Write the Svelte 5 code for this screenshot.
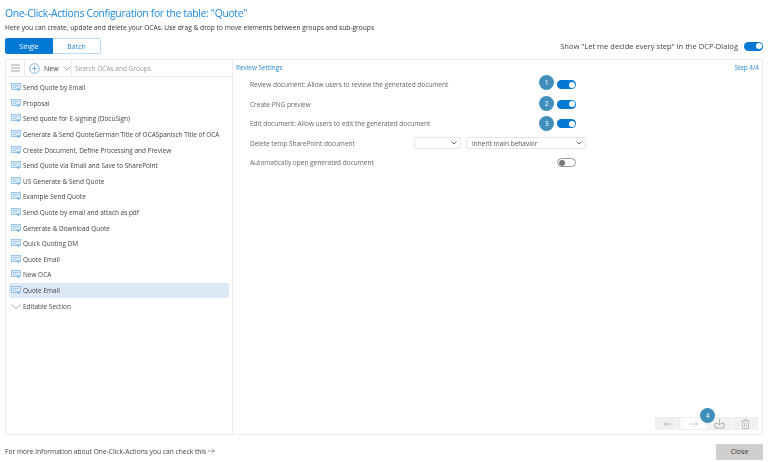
<script>
  const items = ['Send Quote by Email','Proposal','Send quote for E-signing (DocuSign)','Generate & Send QuoteGerman Title of OCASpanisch Title of OCA','Create Document, Define Processing and Preview','Send Quote via Email and Save to SharePoint','US Generate & Send Quote','Example Send Quote','Send Quote by email and attach as pdf','Generate & Download Quote','Quick Quoting DM','Quote Email','New OCA','Quote Email'];
  const settings = [
    { label: 'Review document: Allow users to review the generated document', badge: 1 },
    { label: 'Create PNG preview', badge: 2 },
    { label: 'Edit document: Allow users to edit the generated document', badge: 3 }
  ];
</script>

<div class="page">
  <h1>One-Click-Actions Configuration for the table: "Quote"</h1>
  <p class="sub">Here you can create, update and delete your OCAs. Use drag &amp; drop to move elements between groups and sub-groups</p>

  <div class="modebar">
    <div class="tabs">
      <button class="tab active">Single</button>
      <button class="tab">Batch</button>
    </div>
    <div class="dcp">
      <span>Show "Let me decide every step" in the DCP-Dialog</span>
      <span class="toggle on"></span>
    </div>
  </div>

  <div class="panel">
    <aside class="left">
      <div class="toolbar">
        <div class="tb-menu">
          <svg width="9" height="8" viewBox="0 0 9 8"><path d="M0 1h9M0 4h9M0 7h9" stroke="#999" stroke-width=".9" fill="none"/></svg>
        </div>
        <div class="tb-new">
          <svg width="11" height="11" viewBox="0 0 11 11"><circle cx="5.500" cy="5.500" r="4.800" stroke="#6aa5dc" fill="none" stroke-width=".8"/><path d="M5.500 2.800v5.400M2.800 5.500h5.400" stroke="#6aa5dc" stroke-width=".8"/></svg>
          <span class="new">New</span>
          <svg width="8" height="5" viewBox="0 0 8 5"><path d="M.5.5 4 4 7.500.5" stroke="#888" fill="none" stroke-width=".7"/></svg>
        </div>
        <div class="search">Search OCAs and Groups</div>
      </div>
      <ul>
        {#each items as item, i}
          <li class:sel={i === items.length - 1}>
            <svg width="10" height="9" viewBox="0 0 10 9"><rect x=".4" y=".4" width="9" height="6" fill="#dcebf9" stroke="#7fb3e3" stroke-width=".7"/><path d="M2 2.500h5.500M2 4.300h3" stroke="#7fb3e3" stroke-width=".6"/><path d="M5 5.500 7.800 8.500l1-3z" fill="#7fb3e3"/></svg>
            <span>{item}</span>
          </li>
        {/each}
        <li>
          <svg width="10" height="5" viewBox="0 0 10 5"><path d="M.5.500 5 4.500 9.500.500" stroke="#888" fill="none" stroke-width=".7"/></svg>
          <span>Editable Section</span>
        </li>
      </ul>
    </aside>

    <section class="right">
      <div class="head"><span>Review Settings</span><span>Step 4/4</span></div>
      <div class="rows">
        {#each settings as s}
          <div class="row">
            <span class="label">{s.label}</span>
            <span class="ctl"><span class="badge n{s.badge}">{s.badge}</span><span class="toggle on"></span></span>
          </div>
        {/each}
        <div class="row">
          <span class="label">Delete temp SharePoint document</span>
          <span class="selects">
            <span class="sel-box small"><svg width="6" height="4" viewBox="0 0 6 4"><path d="M.5.500 3 3 5.500.500" stroke="#444" fill="none" stroke-width=".8"/></svg></span>
            <span class="sel-box wide"><span>Inherit main behavior</span><svg width="6" height="4" viewBox="0 0 6 4"><path d="M.5.500 3 3 5.500.500" stroke="#444" fill="none" stroke-width=".8"/></svg></span>
          </span>
        </div>
        <div class="row">
          <span class="label">Automatically open generated document</span>
          <span class="ctl"><span class="toggle off"></span></span>
        </div>
      </div>

      <div class="actions">
        <button class="act"><svg width="10" height="8" viewBox="0 0 10 8"><path d="M10 4H1M4 1.500 1.200 4 4 6.500" stroke="#aaa" fill="none" stroke-width=".7"/></svg></button>
        <button class="act blank"><svg width="10" height="8" viewBox="0 0 10 8"><path d="M0 4h9M6 1.500 8.800 4 6 6.500" stroke="#bbb" fill="none" stroke-width=".7"/></svg></button>
        <button class="act save">
          <svg width="11" height="10" viewBox="0 0 11 10"><path d="M3.500 4.500H1V9h9V4.500H7.500M5.500 0v6M3.500 4l2 2 2-2" stroke="#999" fill="none" stroke-width=".7"/></svg>
          <span class="badge b4">4</span>
        </button>
        <button class="act"><svg width="9" height="10" viewBox="0 0 9 10"><path d="M.5 2h8M3 2V.5h3V2M1.500 2v7.500h6V2M3.500 4v4M5.500 4v4" stroke="#b0b0b0" fill="none" stroke-width=".7"/></svg></button>
      </div>
    </section>
  </div>

  <footer>
    <span class="more">For more information about One-Click-Actions you can check this
      <svg width="7" height="6" viewBox="0 0 7 6"><path d="M0 3h6.500M4 .5 6.500 3 4 5.500" stroke="#666" fill="none" stroke-width=".6"/></svg>
    </span>
    <button class="close">Close</button>
  </footer>
</div>

<style>
  :global(body) { margin: 0; background: #fff; }
  .page {
    width: 768px; height: 462px; box-sizing: border-box; padding: 5px 5px 0;
    display: flex; flex-direction: column;
    font-family: "Open Sans", "Noto Sans", sans-serif; color: #444;
    font-size: 6.45px; overflow: hidden; filter: blur(.35px);
  }
  button { font-family: inherit; padding: 0; cursor: pointer; }
  h1 { margin: 0; font-size: 10.4px; letter-spacing: -.33px; line-height: 16px; font-weight: 400; color: #1f8ae0; }
  .sub { margin: 0; font-size: 6.64px; line-height: 14px; color: #333; }
  .modebar { display: flex; justify-content: space-between; align-items: center; height: 16px; margin-top: 3px; }
  .tabs { display: flex; height: 16px; }
  .tab { width: 48px; border: 1px solid #b9d8f2; border-left: 0; background: #fff; color: #2b88d8; font-size: 7px; border-radius: 0 2px 2px 0; }
  .tab.active { background: #0078d4; color: #fff; border: 1px solid #0078d4; border-radius: 2px 0 0 2px; }
  .dcp { display: flex; align-items: center; gap: 6px; font-size: 7.55px; color: #444; }
  .toggle { display: inline-block; width: 19px; height: 9px; border-radius: 5px; position: relative; box-sizing: border-box; }
  .toggle::after { content: ""; position: absolute; top: 1.500px; right: 1.500px; width: 6px; height: 6px; border-radius: 50%; background: #fff; }
  .toggle.on { background: #0078d4; }
  .toggle.off { background: #fff; border: 1px solid #999; }
  .toggle.off::after { left: 1px; right: auto; top: .5px; background: #777; }
  .panel { flex: none; height: 376px; margin-top: 5px; display: flex; border: 1px solid #ebebeb; box-sizing: border-box; }
  .left { width: 226px; flex: none; border-right: 1px solid #ebebeb; }
  .toolbar { height: 17px; display: flex; align-items: center; border-bottom: 1px solid #ebebeb; box-sizing: border-box; }
  .tb-menu { width: 19px; height: 100%; display: flex; align-items: center; justify-content: center; border-right: 1px solid #ebebeb; box-sizing: border-box; }
  .tb-new { width: 47px; height: 100%; display: flex; align-items: center; gap: 4px; padding-left: 4px; border-right: 1px solid #ebebeb; box-sizing: border-box; }
  .new { font-size: 7px; color: #444; }
  .search { padding-left: 3px; color: #9a9a9a; font-size: 6.5px; white-space: nowrap; }
  ul { list-style: none; margin: 3px 0 0; padding: 0 3px; }
  li { height: 15.6px; display: flex; align-items: center; gap: 2px; padding-left: 2px; border-radius: 2px; color: #444; white-space: nowrap; }
  li.sel { background: #dce8f5; }
  .right { flex: 1; position: relative; display: flex; flex-direction: column; }
  .head { display: flex; justify-content: space-between; padding: 3px 3px 0 3px; color: #2b88d8; font-size: 6.4px; height: 9px; }
  .rows { padding: 3px 186px 0 17px; }
  .row { height: 19.500px; display: flex; align-items: center; justify-content: space-between; color: #666; font-size: 6.5px; }
  .ctl { display: flex; align-items: center; position: relative; }
  .badge { position: absolute; right: 22px; top: -3px; width: 15px; height: 15px; border-radius: 50%; background: #3f8fba; color: #fff; font-size: 6.500px; display: flex; align-items: center; justify-content: center; }
  .n1 { top: -5px; }
  .n2 { top: -4px; }
  .selects { display: flex; gap: 5px; margin-right: -10px; }
  .sel-box { height: 12px; border: 1px solid #e6e6e6; border-radius: 2px; display: flex; align-items: center; justify-content: space-between; padding: 0 3px 0 5px; box-sizing: border-box; color: #555; }
  .small { width: 47px; justify-content: flex-end; }
  .wide { width: 120px; }
  .actions { position: absolute; right: 4px; bottom: 4px; display: flex; gap: 1px; }
  .act { width: 25px; height: 13px; background: #f1f1f1; border: 1px solid #eee; display: flex; align-items: center; justify-content: center; position: relative; }
  .act.blank { background: #fff; }
  .save .b4 { top: -10px; left: -8px; right: auto; }
  footer { flex: 1; display: flex; align-items: center; justify-content: space-between; padding-top: 6px; }
  .more { font-size: 6.67px; color: #444; }
  .close { width: 47px; height: 16px; background: #cfcfcf; border: 0; color: #333; font-size: 7px; }
</style>
